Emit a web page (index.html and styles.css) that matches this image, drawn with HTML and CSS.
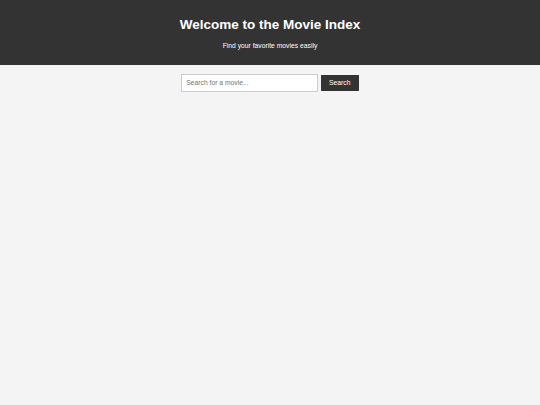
FILE: index.html
```html
<!DOCTYPE html>
<html lang="en">
<head>
<meta charset="utf-8">
<title>Movie Index</title>
<link rel="stylesheet" href="styles.css">
</head>
<body>
<div class="page">
  <header class="site-header">
    <h1 class="site-title">Welcome to the Movie Index</h1>
    <p class="site-tagline">Find your favorite movies easily</p>
  </header>
  <main class="search-area">
    <form class="search-form">
      <input class="search-input" type="text" placeholder="Search for a movie...">
      <button class="search-button" type="button">Search</button>
    </form>
  </main>
</div>
</body>
</html>
```

FILE: styles.css
```css
html, body {
  margin: 0;
  padding: 0;
  background: #f4f4f4;
}
body {
  font-family: "Liberation Sans", Arial, sans-serif;
}
.page {
  zoom: 0.421875;
}
.site-header {
  background: #333333;
  color: #ffffff;
  padding: 20px;
  text-align: center;
}
.site-title {
  font-size: 32px;
  line-height: 37px;
  font-weight: bold;
  margin: 21.44px 0;
}
.site-tagline {
  font-size: 16px;
  line-height: 19px;
  margin: 16px 0;
}
.search-area {
  padding: 20px;
}
.search-form {
  display: flex;
  justify-content: center;
  align-items: center;
  gap: 6px;
  margin: 0;
}
.search-input {
  width: 300px;
  padding: 10px;
  font-size: 16px;
  line-height: 19px;
  font-family: "Liberation Sans", Arial, sans-serif;
  border: 1px solid #cccccc;
  background: #ffffff;
  color: #333;
  outline: none;
}
.search-input::placeholder {
  color: #757575;
}
.search-button {
  padding: 10px 20px;
  font-size: 16px;
  line-height: 18px;
  font-family: "Liberation Sans", Arial, sans-serif;
  background: #333333;
  color: #ffffff;
  border: none;
  border-radius: 1px;
}
```
